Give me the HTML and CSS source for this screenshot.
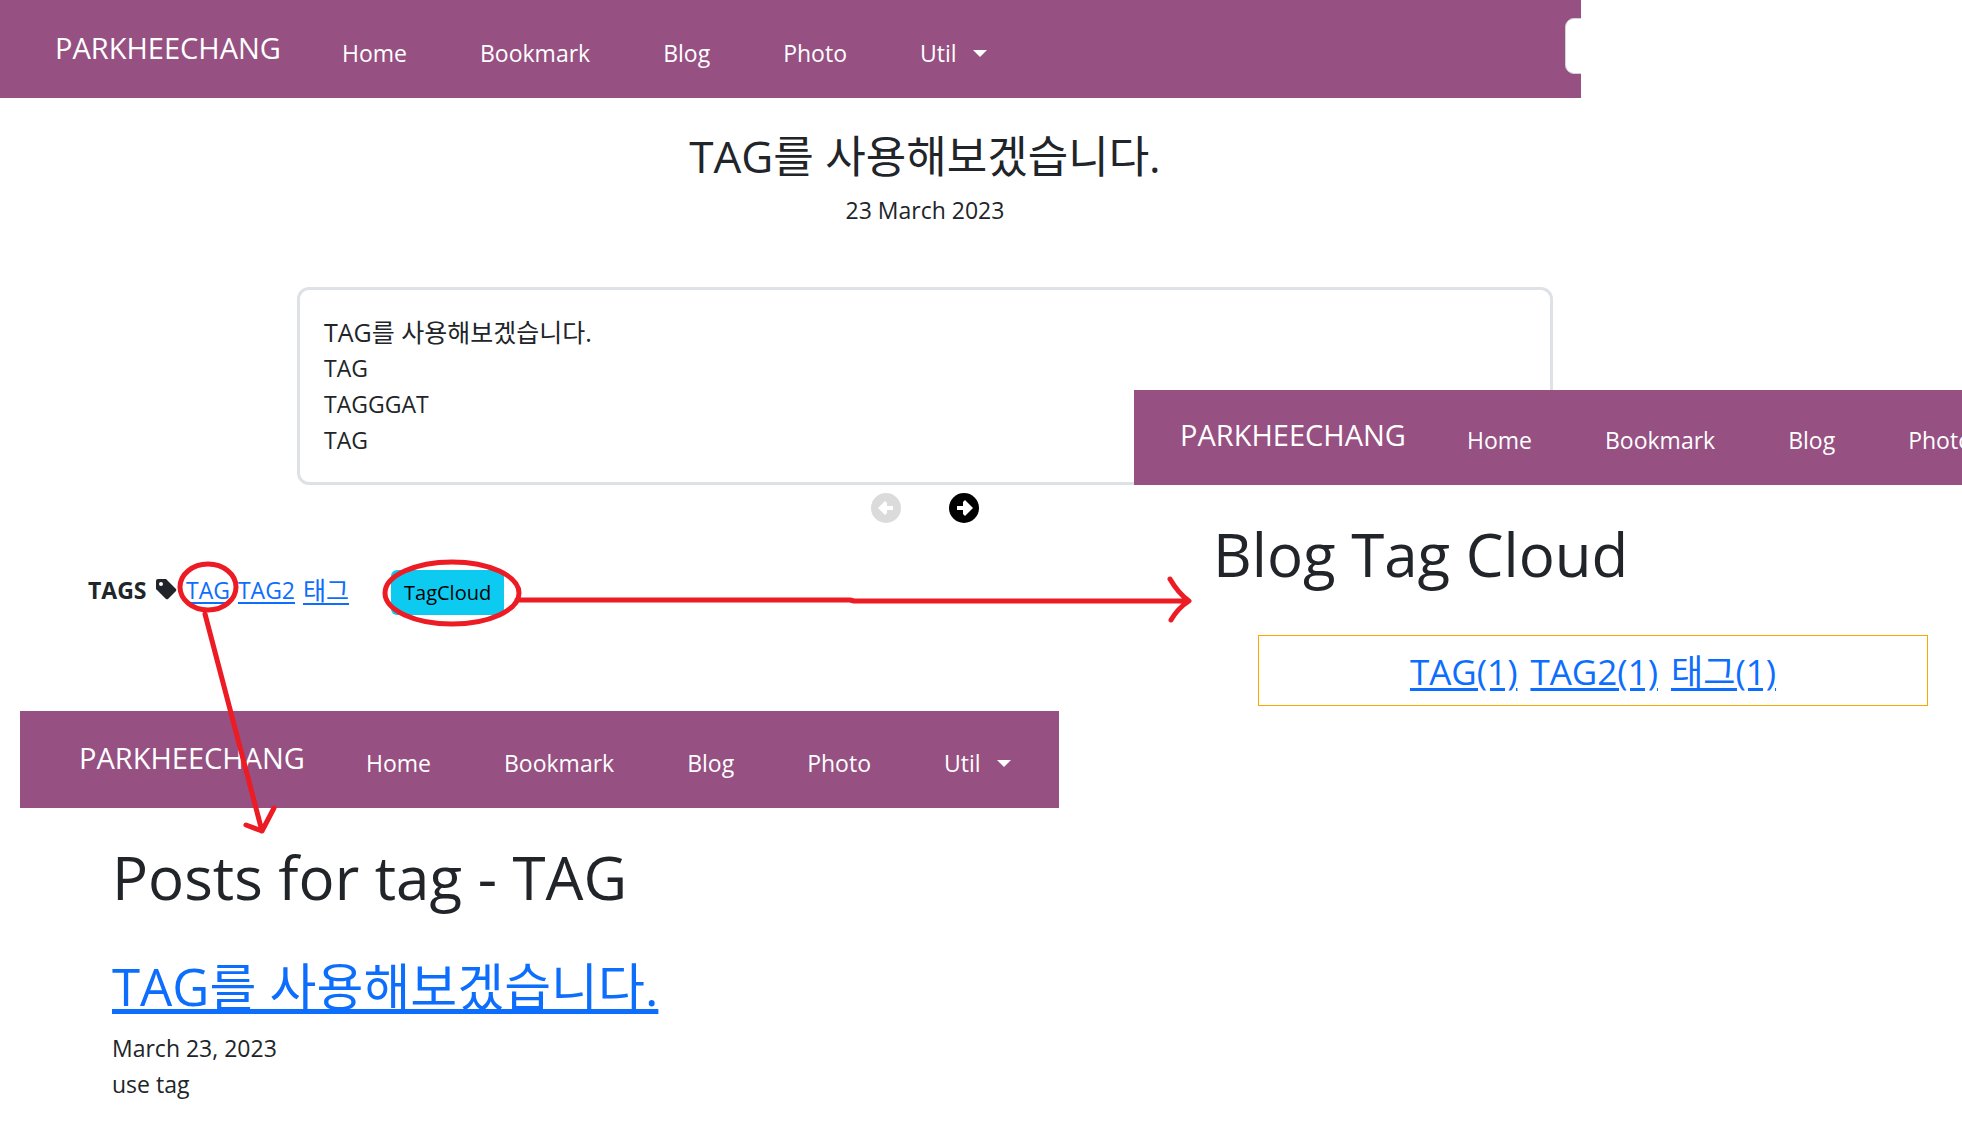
FILE: index.html
```html
<!DOCTYPE html>
<html lang="ko">
<head>
<meta charset="utf-8">
<title>TAG를 사용해보겠습니다.</title>
<link rel="stylesheet" href="styles.css">
</head>
<body>
<main class="board">
  <section class="post-view">
    <header class="navbar navbar-main">
      <a class="brand" href="#">PARKHEECHANG</a>
      <nav class="links">
        <a href="#">Home</a>
        <a href="#">Bookmark</a>
        <a href="#">Blog</a>
        <a href="#">Photo</a>
        <button class="dropdown" type="button">Util</button>
      </nav>
      <input class="search" type="search" aria-label="Search">
    </header>
    <article class="post">
      <h1 class="post-title">TAG를 사용해보겠습니다.</h1>
      <p class="post-date">23 March 2023</p>
      <div class="post-body">
        <p class="hangul">TAG를 사용해보겠습니다.</p>
        <p>TAG</p>
        <p>TAGGGAT</p>
        <p>TAG</p>
      </div>
      <div class="pager">
        <button class="pager-button" type="button" aria-label="Previous post" disabled>
          <svg viewBox="0 0 30 30"><circle cx="15" cy="15" r="15"/><path d="M7 15l7-7 2 2v3h6v4h-6v3l-2 2z"/></svg>
        </button>
        <button class="pager-button" type="button" aria-label="Next post">
          <svg viewBox="0 0 30 30"><circle cx="15" cy="15" r="15"/><path d="M24 15l-8-8-2 2v4H8v4h6v4l2 2z"/></svg>
        </button>
      </div>
    </article>
    <div class="tags">
      <strong>TAGS</strong>
      <svg class="tag-icon" viewBox="0 0 21 21"><path fill-rule="evenodd" d="M0 2a2 2 0 0 1 2-2h8a2 2 0 0 1 1 1l9 9a2 2 0 0 1 0 2l-8 8a2 2 0 0 1-2 0l-9-9a2 2 0 0 1-1-2zM5 3a2 2 0 1 0 0 4a2 2 0 0 0 0-4z"/></svg>
      <div class="tag-list">
        <a href="#">TAG</a>
        <a href="#">TAG2</a>
        <a class="hangul" href="#">태그</a>
      </div>
      <button class="cloud-button" type="button">TagCloud</button>
    </div>
  </section>

  <section class="tag-posts">
    <header class="navbar">
      <a class="brand" href="#">PARKHEECHANG</a>
      <nav class="links">
        <a href="#">Home</a>
        <a href="#">Bookmark</a>
        <a href="#">Blog</a>
        <a href="#">Photo</a>
        <button class="dropdown" type="button">Util</button>
      </nav>
    </header>
    <div class="tag-posts-body">
      <h1 class="page-title">Posts for tag - TAG</h1>
      <h2 class="entry-title"><a href="#">TAG를 사용해보겠습니다.</a></h2>
      <p>March 23, 2023</p>
      <p>use tag</p>
    </div>
  </section>

  <section class="cloud-view">
    <header class="navbar">
      <a class="brand" href="#">PARKHEECHANG</a>
      <nav class="links">
        <a href="#">Home</a>
        <a href="#">Bookmark</a>
        <a href="#">Blog</a>
        <a href="#">Photo</a>
      </nav>
    </header>
    <div class="cloud-body">
      <h1 class="page-title">Blog Tag Cloud</h1>
      <div class="cloud">
        <a href="#">TAG(1)</a>
        <a href="#">TAG2(1)</a>
        <a href="#">태그(1)</a>
      </div>
    </div>
  </section>

  <svg class="marks" width="1200" height="840" viewBox="0 0 1200 840" aria-hidden="true">
    <ellipse cx="208" cy="587" rx="28" ry="23"/>
    <ellipse cx="452" cy="593" rx="67" ry="31"/>
    <path d="M205 614L262 831M246 825L262 831L274 808"/>
    <path d="M517 600H850L854 601H1188M1170 579Q1178 593 1189 601Q1178 608 1171 620"/>
  </svg>
</main>
</body>
</html>
```
FILE: styles.css
```css
* { box-sizing: border-box; }

body {
  margin: 0;
  background: #fff;
  color: #212529;
  font: 400 23px/36px "Open Sans", "Noto Sans CJK KR", sans-serif;
}

h1, h2, p { margin: 0; font-weight: 400; }

a { color: #0d6efd; text-underline-offset: 3px; }

button { font: inherit; cursor: pointer; }

.hangul { font-size: 25px; }

.board {
  position: relative;
  min-height: 100vh;
  overflow: hidden;
}

/* Navigation bar, shared by the three views */
.navbar {
  display: flex;
  align-items: flex-end;
  height: 98px;
  padding-left: 55px;
  overflow: hidden;
  background: #965082;
  white-space: nowrap;
}

.navbar a, .dropdown { color: #fff; text-decoration: none; }

.navbar-main { margin-right: 381px; }

.brand { padding-bottom: 30px; font-size: 29px; line-height: 40px; }

.links {
  display: flex;
  gap: 73px;
  padding: 0 0 27px 61px;
}

.dropdown {
  display: flex;
  align-items: center;
  gap: 16px;
  padding: 0;
  border: 0;
  background: none;
}

.dropdown::after {
  content: "";
  border: 7px solid transparent;
  border-top-color: #fff;
  border-bottom: 0;
}

.search {
  flex: none;
  width: 300px;
  height: 56px;
  margin: 0 -284px 24px auto;
  border: 1px solid #ced4da;
  border-radius: 9px;
  background: #fff;
}

/* Post */
.post { margin: 32px 409px 0 297px; text-align: center; }

.post-title { font-size: 44px; line-height: 52px; }

.post-date { padding-top: 10px; }

.post-body {
  margin-top: 59px;
  padding: 24px;
  border: 3px solid #dee2e6;
  border-radius: 12px;
  text-align: left;
}

.pager { display: flex; justify-content: center; gap: 48px; padding-top: 8px; }

.pager-button { display: flex; padding: 0; border: 0; background: none; color: #000; }

.pager-button:disabled { color: #dbdbdb; }

.pager-button svg { width: 30px; height: 30px; fill: currentColor; }

.pager-button path { fill: #fff; }

.tags {
  display: flex;
  align-items: flex-start;
  padding: 47px 0 0 88px;
  line-height: 40px;
}

.tags strong { width: 68px; }

.tag-icon { width: 21px; height: 21px; margin-top: 9px; fill: #212529; }

.tag-list { display: flex; gap: 8px; width: 214px; padding-left: 9px; }

.cloud-button {
  height: 45px;
  padding: 0 13px;
  border: 0;
  border-radius: 6px;
  background: #0dcaf0;
  color: #000;
  font-size: 20px;
}

/* Posts for one tag */
.tag-posts { margin: 96px 903px 0 20px; }

.tag-posts .navbar { height: 97px; padding-left: 59px; }

.tag-posts-body { padding: 33px 0 16px 92px; }

.page-title { font-size: 60px; line-height: 72px; white-space: nowrap; }

.entry-title { padding: 44px 0 15px; font-size: 51px; line-height: 58px; white-space: nowrap; }

/* Tag cloud view, laid over the post */
.cloud-view {
  position: absolute;
  top: 390px;
  left: 1134px;
  right: 0;
  background: #fff;
}

.cloud-view .navbar { height: 95px; padding-left: 46px; }

.cloud-body { padding: 33px 34px 0 79px; }

.cloud {
  display: flex;
  justify-content: center;
  gap: 13px;
  margin: 45px 0 0 45px;
  padding: 13px 0 10px;
  border: 1px solid #ffa500;
  font-size: 35px;
  line-height: 46px;
}

/* Hand-drawn arrows over the views */
.marks {
  position: absolute;
  top: 0;
  left: 0;
  fill: none;
  stroke: #ed1c24;
  stroke-width: 5;
  stroke-linecap: round;
  stroke-linejoin: round;
  pointer-events: none;
}
```
